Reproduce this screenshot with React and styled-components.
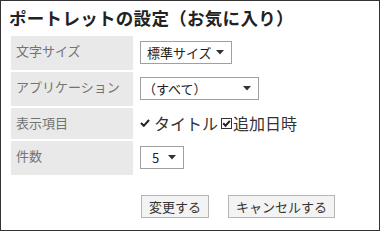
import React from "react";
import styled, { createGlobalStyle } from "styled-components";

const Global = createGlobalStyle`
  html, body { margin: 0; padding: 0; background: #fff; }
  body { font-family: "Noto Sans CJK JP", "Noto Sans", sans-serif; color: #333; }
`;

const Frame = styled.div`
  box-sizing: border-box;
  width: 380px;
  height: 231px;
  border: 1px solid #333;
  padding: 5px 8px 0 8px;
`;

const Title = styled.h1`
  margin: 0;
  font-size: 17.5px;
  line-height: 24px;
  font-weight: 700;
  color: #222;
  letter-spacing: 0.3px;
`;

const Grid = styled.div`
  display: grid;
  grid-template-columns: 122px 1fr;
  gap: 2px;
  margin: 6px 0 0 2px;
`;

const Label = styled.div`
  background: ${(p) => (p.$blank ? "transparent" : "#e9e9e9")};
  color: #737373;
  font-size: 13px;
  line-height: 19px;
  padding: 5px 5px;
`;

const Value = styled.div`
  display: flex;
  align-items: center;
  padding: ${(p) => p.$pad || "5px 5px 6px"};
`;

const Select = styled.div`
  box-sizing: border-box;
  width: ${(p) => p.$w}px;
  height: 23px;
  border: 1px solid #a0a0a0;
  background: #fff;
  display: flex;
  align-items: center;
  justify-content: space-between;
  padding: 0 7px 0 ${(p) => p.$pl}px;
  font-size: 13px;
  color: #222;
`;

const Arrow = styled.svg`
  width: 8px;
  height: 5px;
  flex: none;
`;

const CheckText = styled.span`
  display: inline-flex;
  align-items: center;
  font-size: 16px;
  line-height: 20px;
  color: #333;
  margin-right: ${(p) => p.$mr || 0}px;
`;

const Icon = styled.svg`
  flex: none;
  margin-right: ${(p) => p.$mr || 0}px;
`;

const Buttons = styled.div`
  display: flex;
  gap: 19px;
  margin: 18px 0 0 1px;
`;

const Button = styled.button`
  box-sizing: border-box;
  height: 23px;
  padding: 0 7px;
  border: 1px solid #b5b5b5;
  background: #f3f3f3;
  color: #333;
  font-family: inherit;
  font-size: 13px;
  line-height: 21px;
  cursor: pointer;
`;

const Down = () => (
  <Arrow viewBox="0 0 8 5">
    <path d="M0 0 H8 L4 4.5 Z" fill="#333" />
  </Arrow>
);

export default function App() {
  return (
    <>
      <Global />
      <Frame>
        <Title>ポートレットの設定（お気に入り）</Title>
        <Grid>
          <Label>文字サイズ</Label>
          <Value>
            <Select $w={92} $pl={6}>
              <span>標準サイズ</span>
              <Down />
            </Select>
          </Value>
          <Label>アプリケーション</Label>
          <Value>
            <Select $w={119} $pl={2}>
              <span>（すべて）</span>
              <Down />
            </Select>
          </Value>
          <Label>表示項目</Label>
          <Value>
            <CheckText $mr={3}>
              <Icon width="10" height="8" viewBox="0 0 10 8" $mr={4}>
                <path d="M1 4 L3.8 6.8 L9 1" stroke="#222" strokeWidth="2" fill="none" />
              </Icon>
              タイトル
            </CheckText>
            <CheckText>
              <Icon width="11" height="11" viewBox="0 0 11 11" $mr={1}>
                <rect x="0.5" y="0.5" width="10" height="10" fill="#fff" stroke="#333" />
                <path d="M2.2 5.3 L4.6 7.7 L8.8 2.9" stroke="#222" strokeWidth="2" fill="none" />
              </Icon>
              追加日時
            </CheckText>
          </Value>
          <Label>件数</Label>
          <Value>
            <Select $w={44} $pl={11}>
              <span>5</span>
              <Down />
            </Select>
          </Value>
          <Label $blank />
          <Value $pad="0 5px">
            <Buttons>
              <Button>変更する</Button>
              <Button>キャンセルする</Button>
            </Buttons>
          </Value>
        </Grid>
      </Frame>
    </>
  );
}
